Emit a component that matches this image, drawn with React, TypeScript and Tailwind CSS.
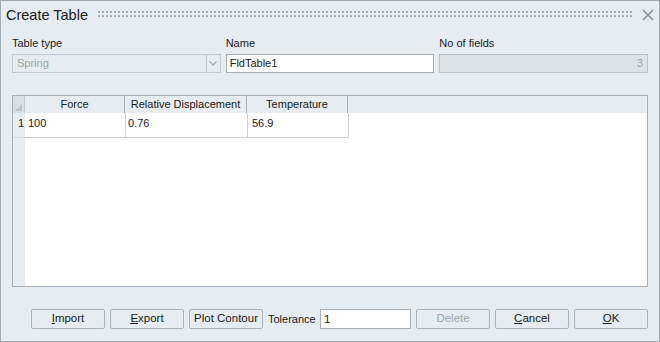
import React from "react";

const font = { fontFamily: '"Segoe UI", "Liberation Sans", Arial, sans-serif' };

function Btn({ label, u, disabled }: { label: string; u?: number; disabled?: boolean }) {
  const text =
    u === undefined ? (
      label
    ) : (
      <>
        {label.slice(0, u)}
        <span className="underline">{label[u]}</span>
        {label.slice(u + 1)}
      </>
    );
  return (
    <button
      className={`h-[20px] w-[74px] shrink-0 rounded-[2px] border border-[#acb3b8] bg-[#e6ecf0] text-[11.5px] leading-none ${
        disabled ? "text-[#a3a8ab]" : "text-[#1b1b1b]"
      }`}
    >
      {text}
    </button>
  );
}

export default function App() {
  return (
    <div
      className="flex h-[342px] w-[660px] flex-col border border-[#a4abb0] bg-[#e6ecf0] text-[#1b1b1b]"
      style={font}
    >
      {/* Title bar */}
      <div className="flex h-[28px] items-center pl-[5px] pr-[5px]">
        <span className="text-[14.5px] leading-none">Create Table</span>
        <svg className="ml-[10px] mr-[4px] h-[8px] flex-1">
          <defs>
            <pattern id="dots" width="4" height="4" patternUnits="userSpaceOnUse">
              <rect x="0" y="0" width="2" height="2" fill="#a9afb3" />
            </pattern>
          </defs>
          <rect x="0" y="0" width="100%" height="6" fill="url(#dots)" />
        </svg>
        <svg className="ml-[4px]" width="12" height="12" viewBox="0 0 12 12">
          <path d="M1 1L11 11M11 1L1 11" stroke="#8e9396" strokeWidth="1.6" />
        </svg>
      </div>

      <div className="flex flex-1 flex-col px-[11px]">
        {/* Fields */}
        <div className="mt-[7px] grid grid-cols-3 gap-x-[5px] text-[11px]">
          <div className="flex flex-col">
            <span className="h-[18px] leading-[14px]">Table type</span>
            <div className="flex h-[19px] border border-[#c2c8cc] bg-[#e6ecf0]">
              <span className="flex-1 pl-[4px] leading-[17px] text-[#a0a5a8]">Spring</span>
              <div className="flex w-[14px] items-center justify-center border-l border-[#c2c8cc]">
                <svg width="8" height="5" viewBox="0 0 8 5">
                  <path d="M0.5 0.5L4 4L7.5 0.5" stroke="#a7adb1" strokeWidth="1.3" fill="none" />
                </svg>
              </div>
            </div>
          </div>
          <div className="flex flex-col">
            <span className="h-[18px] leading-[14px]">Name</span>
            <div className="h-[19px] border border-[#a9b0b5] bg-white pl-[3px] leading-[17px]">FldTable1</div>
          </div>
          <div className="flex flex-col">
            <span className="h-[18px] leading-[14px]">No of fields</span>
            <div className="h-[19px] border border-[#b9bfc3] bg-[#dde3e6] pr-[4px] text-right leading-[17px] text-[#9ea3a6]">
              3
            </div>
          </div>
        </div>

        {/* Table */}
        <div className="mt-[22px] flex h-[192px] flex-col border border-[#a9b0b5] bg-white text-[11px]">
          <div className="flex h-[17px] bg-[#e6ecf0]">
            <div className="relative w-[12px] border-r border-[#c5ccd0] bg-[#d8e0e4]">
              <svg className="absolute bottom-[2px] right-[2px]" width="7" height="7" viewBox="0 0 7 7">
                <path d="M7 0V7H0Z" fill="#b9c4cb" />
              </svg>
            </div>
            <div className="w-[100px] border-r border-[#a9b0b5] text-center leading-[16px]">Force</div>
            <div className="w-[122px] border-r border-[#a9b0b5] text-center leading-[16px]">Relative Displacement</div>
            <div className="w-[101px] border-r border-[#a9b0b5] text-center leading-[16px]">Temperature</div>
          </div>
          <div className="flex flex-1">
            <div className="w-[12px] bg-[#e6ecf0]">
              <div className="h-[25px] border-b border-[#d5dbdf] pr-[1px] text-right leading-[20px]">1</div>
            </div>
            <div className="flex h-[25px] border-b border-[#d0d0d0]">
              <div className="w-[101px] border-r border-[#d0d0d0] pl-[3px] leading-[20px]">100</div>
              <div className="w-[122px] border-r border-[#d0d0d0] pl-[2px] leading-[20px]">0.76</div>
              <div className="w-[101px] border-r border-[#d0d0d0] pl-[4px] leading-[20px]">56.9</div>
            </div>
          </div>
        </div>

        {/* Buttons */}
        <div className="mt-[22px] flex items-center gap-[5px] pl-[19px]">
          <Btn label="Import" u={0} />
          <Btn label="Export" u={0} />
          <Btn label="Plot Contour" />
          <span className="w-[47px] shrink-0 text-[11px]">Tolerance</span>
          <div className="h-[20px] w-[91px] shrink-0 border border-[#a9b0b5] bg-white pl-[3px] text-[11.5px] leading-[18px]">
            1
          </div>
          <Btn label="Delete" disabled />
          <Btn label="Cancel" u={0} />
          <Btn label="OK" u={0} />
        </div>
      </div>
    </div>
  );
}
